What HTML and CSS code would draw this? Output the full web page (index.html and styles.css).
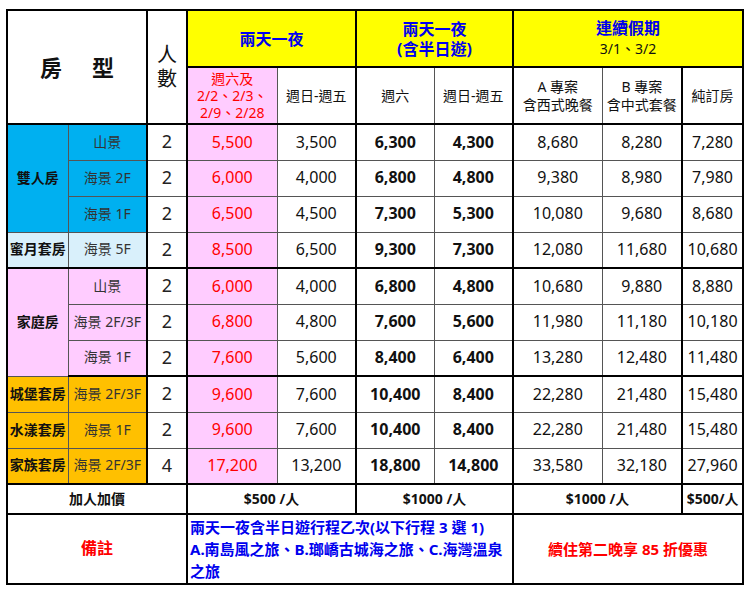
FILE: index.html
```html
<!DOCTYPE html>
<html lang="zh-Hant">
<head>
<meta charset="utf-8">
<title>房型價目表</title>
<link rel="stylesheet" href="styles.css">
</head>
<body>
<table class="price">
  <colgroup>
    <col class="c1"><col class="c2"><col class="c3 tl"><col class="c4 tl"><col class="c5"><col class="c6 tl"><col class="c7"><col class="c8 tl"><col class="c9"><col class="c10 tl">
  </colgroup>
  <tr class="hr1 tb">
    <th rowspan="2" colspan="2" class="roomtype">房　型</th>
    <th rowspan="2" class="people">人<br>數</th>
    <th colspan="2" class="yellow blue big">兩天一夜</th>
    <th colspan="2" class="yellow blue big">兩天一夜<br>(含半日遊)</th>
    <th colspan="3" class="yellow"><span class="blue big">連續假期</span><br><span class="dates">3/1、3/2</span></th>
  </tr>
  <tr class="hr2 tb">
    <th class="pink red sat">週六及<br>2/2、2/3、<br>2/9、2/28</th>
    <th>週日-週五</th>
    <th>週六</th>
    <th>週日-週五</th>
    <th>A 專案<br>含西式晚餐</th>
    <th>B 專案<br>含中式套餐</th>
    <th>純訂房</th>
  </tr>
  <tr class="dr">
    <td rowspan="3" class="g cyan">雙人房</td><td class="v cyan">山景</td><td class="n">2</td>
    <td class="pink red">5,500</td><td>3,500</td><td class="b">6,300</td><td class="b">4,300</td><td>8,680</td><td>8,280</td><td>7,280</td>
  </tr>
  <tr class="dr">
    <td class="v cyan">海景 2F</td><td class="n">2</td>
    <td class="pink red">6,000</td><td>4,000</td><td class="b">6,800</td><td class="b">4,800</td><td>9,380</td><td>8,980</td><td>7,980</td>
  </tr>
  <tr class="dr">
    <td class="v cyan">海景 1F</td><td class="n">2</td>
    <td class="pink red">6,500</td><td>4,500</td><td class="b">7,300</td><td class="b">5,300</td><td>10,080</td><td>9,680</td><td>8,680</td>
  </tr>
  <tr class="dr tb">
    <td class="g sky">蜜月套房</td><td class="v sky">海景 5F</td><td class="n">2</td>
    <td class="pink red">8,500</td><td>6,500</td><td class="b">9,300</td><td class="b">7,300</td><td>12,080</td><td>11,680</td><td>10,680</td>
  </tr>
  <tr class="dr">
    <td rowspan="3" class="g pink">家庭房</td><td class="v pink">山景</td><td class="n">2</td>
    <td class="pink red">6,000</td><td>4,000</td><td class="b">6,800</td><td class="b">4,800</td><td>10,680</td><td>9,880</td><td>8,880</td>
  </tr>
  <tr class="dr">
    <td class="v pink">海景 2F/3F</td><td class="n">2</td>
    <td class="pink red">6,800</td><td>4,800</td><td class="b">7,600</td><td class="b">5,600</td><td>11,980</td><td>11,180</td><td>10,180</td>
  </tr>
  <tr class="dr tb">
    <td class="v pink">海景 1F</td><td class="n">2</td>
    <td class="pink red">7,600</td><td>5,600</td><td class="b">8,400</td><td class="b">6,400</td><td>13,280</td><td>12,480</td><td>11,480</td>
  </tr>
  <tr class="dr">
    <td class="g orange">城堡套房</td><td class="v orange">海景 2F/3F</td><td class="n">2</td>
    <td class="pink red">9,600</td><td>7,600</td><td class="b">10,400</td><td class="b">8,400</td><td>22,280</td><td>21,480</td><td>15,480</td>
  </tr>
  <tr class="dr">
    <td class="g orange">水漾套房</td><td class="v orange">海景 1F</td><td class="n">2</td>
    <td class="pink red">9,600</td><td>7,600</td><td class="b">10,400</td><td class="b">8,400</td><td>22,280</td><td>21,480</td><td>15,480</td>
  </tr>
  <tr class="dr tb">
    <td class="g orange">家族套房</td><td class="v orange">海景 2F/3F</td><td class="n">4</td>
    <td class="pink red">17,200</td><td>13,200</td><td class="b">18,800</td><td class="b">14,800</td><td>33,580</td><td>32,180</td><td>27,960</td>
  </tr>
  <tr class="extra tb">
    <td colspan="3">加人加價</td>
    <td colspan="2">$500 /人</td>
    <td colspan="2">$1000 /人</td>
    <td colspan="2">$1000 /人</td>
    <td>$500/人</td>
  </tr>
  <tr class="note">
    <td colspan="3" class="red notehead">備註</td>
    <td colspan="4" class="blue notetext">兩天一夜含半日遊行程乙次(以下行程 3 選 1)<br>A.南島風之旅、B.瑯嶠古城海之旅、C.海灣溫泉<br>之旅</td>
    <td colspan="3" class="red promo">續住第二晚享 85 折優惠</td>
  </tr>
</table>
</body>
</html>
```

FILE: styles.css
```css
html, body {
  margin: 0;
  padding: 0;
  background: #ffffff;
}

body {
  padding: 9px 0 0 6px;
  font-family: "Noto Sans", "Noto Sans CJK TC", sans-serif;
  color: #111;
}

.price {
  border-collapse: collapse;
  table-layout: fixed;
  width: 736px;
  border: 2px solid #000;
}

.price td,
.price th {
  border: 1px solid #555;
  padding: 0;
  text-align: center;
  vertical-align: middle;
  font-size: 16px;
  font-weight: normal;
  line-height: 1.2;
  white-space: nowrap;
  overflow: hidden;
}

.c1 { width: 61px; }
.c2 { width: 79px; }
.c3 { width: 40px; }
.c4 { width: 90px; }
.c5 { width: 79px; }
.c6 { width: 78px; }
.c7 { width: 79px; }
.c8 { width: 89px; }
.c9 { width: 80px; }
.c10 { width: 61px; }

.tl { border-left: 2px solid #000; }
.tb td, .tb th { border-bottom: 2px solid #000; }

.hr1 { height: 57px; }
.hr2 { height: 57px; }
.dr { height: 36px; }
.extra { height: 30px; }
.note { height: 70px; }

.hr2 th {
  font-size: 14px;
  line-height: 18px;
}

.hr2 .sat {
  font-size: 14px;
  line-height: 17px;
}

.roomtype {
  font-size: 22px !important;
  font-weight: bold !important;
  letter-spacing: 4px;
  padding-left: 4px !important;
}

.people {
  font-size: 20px !important;
  line-height: 24px !important;
}

.big {
  font-size: 16px;
  font-weight: bold;
  line-height: 20px;
}

.price th.big {
  font-size: 16px;
  font-weight: bold;
  line-height: 20px;
}

.dates {
  font-size: 14px;
  color: #111;
  line-height: 20px;
}

.yellow { background: #ffff00; }
.pink { background: #ffccff; }
.cyan { background: #00b0f0; }
.sky { background: #d9f0fb; }
.orange { background: #ffc000; }

.red { color: #ff0000; }
.blue { color: #0000ee; }

.price td.g {
  font-size: 14px;
  font-weight: bold;
  color: #111;
}

.price td.v {
  font-size: 14px;
  color: #333;
}

.price td.n {
  font-size: 18px;
  color: #222;
}

.price td.b {
  font-weight: bold;
}

.extra td {
  font-size: 14px;
  font-weight: bold;
}

.price td.notehead {
  font-size: 16px;
  font-weight: bold;
}

.price td.notetext {
  font-size: 15px;
  font-weight: bold;
  text-align: left;
  line-height: 22px;
  padding-left: 2px;
}

.price td.promo {
  font-size: 15px;
  font-weight: bold;
}
```
